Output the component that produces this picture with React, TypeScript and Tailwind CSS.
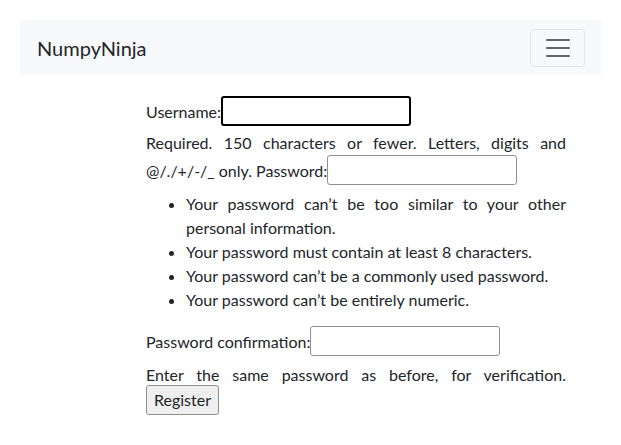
export default function App() {
    return (
        <div className="min-h-[445px] bg-white pt-5 text-[#212529]" style={{ fontFamily: 'Lato, "Open Sans", sans-serif' }}>
            {/* Navbar */}
            <nav className="mx-5 flex h-[55px] items-center justify-between bg-[#f8f9fa] pl-[17px] pr-4">
                <span className="text-[20px] text-[#212529]">NumpyNinja</span>
                <button className="flex h-[38px] w-[55px] items-center justify-center rounded border border-[#e5e5e5]">
                    <svg width="30" height="30" viewBox="0 0 30 30">
                        <path
                            d="M4 7h22M4 15h22M4 23h22"
                            stroke="rgba(33,37,41,0.7)"
                            strokeWidth="2"
                            strokeLinecap="round"
                        />
                    </svg>
                </button>
            </nav>

            {/* Form */}
            <form className="ml-[146px] mt-[21px] w-[420px] text-justify text-[16px] leading-[24px] text-[#212529]">
                <p>
                    <label>Username:</label>
                    <input
                        type="text"
                        className="h-[30px] w-[190px] rounded-[3px] border-2 border-black"
                    />
                </p>
                <p className="mt-[5px]">
                    <span>Required. 150 characters or fewer. Letters, digits and @/./+/-/_ only.</span>{' '}
                    <label>Password:</label>
                    <input
                        type="password"
                        className="h-[30px] w-[190px] rounded-[3px] border border-[#8f8f8f]"
                    />
                </p>
                <ul className="mt-[7px] list-disc pl-10">
                    <li>Your password can’t be too similar to your other personal information.</li>
                    <li>Your password must contain at least 8 characters.</li>
                    <li>Your password can’t be a commonly used password.</li>
                    <li>Your password can’t be entirely numeric.</li>
                </ul>
                <p className="mt-[14px]">
                    <label>Password confirmation:</label>
                    <input
                        type="password"
                        className="h-[30px] w-[190px] rounded-[3px] border border-[#8f8f8f]"
                    />
                </p>
                <p className="mt-[7px]">
                    <span>Enter the same password as before, for verification.</span>{' '}
                    <button
                        type="submit"
                        className="-mt-[2px] h-[30px] rounded-[3px] border border-[#8f8f8f] bg-[#efefef] px-[7px]"
                    >
                        Register
                    </button>
                </p>
            </form>
        </div>
    );
}
